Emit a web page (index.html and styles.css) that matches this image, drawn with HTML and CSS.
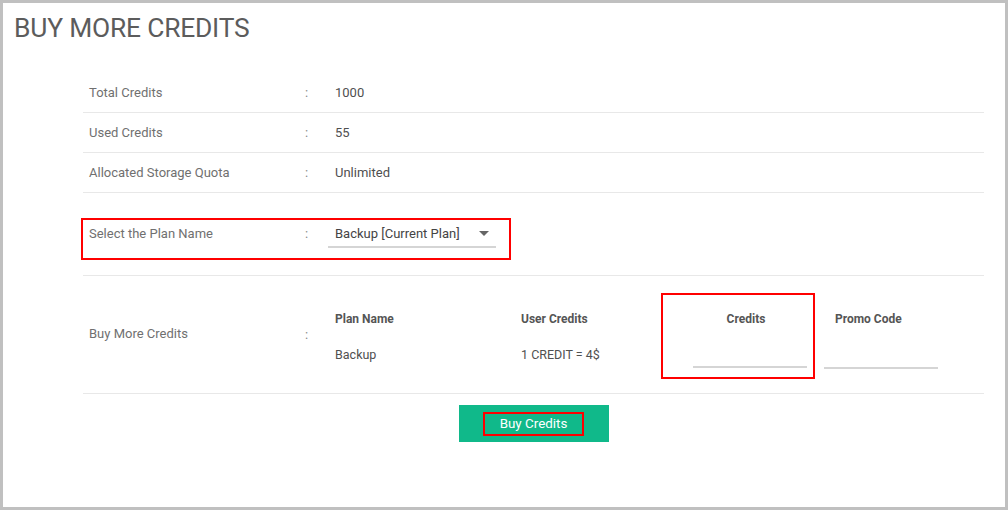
FILE: index.html
```html
<!DOCTYPE html>
<html>
<head>
<meta charset="utf-8">
<link rel="stylesheet" href="styles.css">
</head>
<body>
<div class="frame">
  <h1 class="title">BUY MORE CREDITS</h1>
  <div class="table">
    <div class="row">
      <div class="label">Total Credits</div>
      <div class="colon">:</div>
      <div class="value">1000</div>
    </div>
    <div class="row">
      <div class="label">Used Credits</div>
      <div class="colon">:</div>
      <div class="value">55</div>
    </div>
    <div class="row">
      <div class="label">Allocated Storage Quota</div>
      <div class="colon">:</div>
      <div class="value">Unlimited</div>
    </div>
    <div class="plan-row">
      <div class="plan-box">
        <div class="label">Select the Plan Name</div>
        <div class="colon">:</div>
        <div class="select">
          <span>Backup [Current Plan]</span>
          <span class="arrow"></span>
        </div>
      </div>
    </div>
    <div class="buy-row">
      <div class="label">Buy More Credits</div>
      <div class="colon">:</div>
      <div class="sub">
        <div class="cell">
          <div class="head">Plan Name</div>
          <div class="val">Backup</div>
        </div>
        <div class="cell">
          <div class="head">User Credits</div>
          <div class="val">1 CREDIT = 4$</div>
        </div>
        <div class="cell credits-cell">
          <div class="head credits-head">Credits</div>
          <div class="input credits-input"></div>
        </div>
        <div class="cell promo-cell">
          <div class="head promo-head">Promo Code</div>
          <div class="input promo-input"></div>
        </div>
      </div>
    </div>
    <div class="actions">
      <button class="btn"><span class="btn-text">Buy Credits</span></button>
    </div>
  </div>
</div>
</body>
</html>
```
FILE: styles.css
```css
* { box-sizing: border-box; }
html, body { margin: 0; padding: 0; }
body {
  font-family: Roboto, "Liberation Sans", sans-serif;
  background: #fff;
}
.frame {
  width: 1008px;
  height: 510px;
  border: 3px solid #c0c0c0;
  background: #fff;
}
.title {
  margin: 0;
  padding: 10px 0 0 11px;
  height: 70px;
  font-size: 26.4px;
  font-weight: 400;
  color: #5c5c5c;
  letter-spacing: -0.2px;
}
.table {
  margin: 0 21px 0 80px;
  font-size: 13px;
}
.row {
  display: flex;
  align-items: center;
  height: 40px;
  padding-bottom: 1px;
  border-bottom: 1px solid #e8e8e8;
}
.label {
  width: 222px;
  padding-left: 6px;
  color: #707070;
}
.colon {
  width: 30px;
  color: #8a8a8a;
}
.value { color: #4f4f4f; }
.plan-row {
  height: 83px;
  padding-top: 27px;
  border-bottom: 1px solid #e8e8e8;
}
.plan-box {
  display: flex;
  align-items: flex-start;
  width: 426px;
  height: 38px;
  outline: 2px solid #f00;
  outline-offset: 0;
  padding-top: 6px;
}
.select {
  margin-left: -7px;
  width: 168px;
  height: 22px;
  border-bottom: 2px solid #d5d5d5;
  display: flex;
  justify-content: space-between;
  padding-left: 7px;
  padding-right: 7px;
  color: #444;
}
.arrow {
  margin-top: 5px;
  width: 0;
  height: 0;
  border-left: 5px solid transparent;
  border-right: 5px solid transparent;
  border-top: 5px solid #666;
}
.buy-row {
  display: flex;
  align-items: center;
  height: 118px;
  border-bottom: 1px solid #e8e8e8;
}
.buy-row .label { padding-bottom: 3px; }
.buy-row .colon { padding-bottom: 1px; }
.sub {
  display: flex;
  height: 117px;
}
.cell {
  padding-top: 36px;
}
.cell:nth-child(1) { width: 186px; }
.cell:nth-child(2) { width: 141px; }
.head {
  font-weight: 700;
  color: #555;
  font-size: 12px;
  height: 35px;
}
.val { color: #505050; font-size: 12.5px; }
.credits-cell {
  width: 152px;
  margin-top: 18px;
  height: 84px;
  padding-top: 18px;
  outline: 2px solid #f00;
  outline-offset: -1px;
}
.credits-head {
  text-align: center;
  padding-left: 16px;
}
.input {
  width: 114px;
  height: 2px;
  background: #d5d5d5;
}
.credits-input { margin: 19px 0 0 31px; }
.promo-cell { width: 140px; }
.promo-head { padding-left: 21px; }
.promo-input { margin: 20px 0 0 10px; }
.actions {
  display: flex;
  justify-content: center;
  padding-top: 11px;
}
.btn {
  width: 150px;
  height: 37px;
  background: #10b98a;
  border: none;
  color: #fff;
  font-family: Roboto, "Liberation Sans", sans-serif;
  font-size: 13.4px;
  padding: 0;
}
.btn-text {
  display: inline-block;
  padding: 3px 16px 4px;
  outline: 2px solid #f00;
  outline-offset: -1px;
}
```
